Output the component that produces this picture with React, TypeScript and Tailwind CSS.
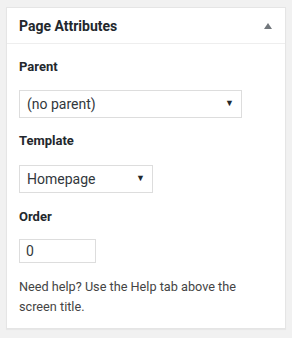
export default function App() {
  return (
    <div className="min-h-screen bg-[#f1f1f1] pl-[6px] pr-[6px] pt-[7px] pb-2 font-['Roboto',sans-serif] text-[#444]">
      <div className="w-[280px] border border-[#e5e5e5] bg-white shadow-[0_1px_1px_rgba(0,0,0,0.04)]">
        <div className="flex h-[36px] items-center justify-between border-b border-[#eee] pl-3 pr-[13px]">
          <h2 className="text-[14px] font-bold leading-none text-[#23282d]">Page Attributes</h2>
          <svg width="8" height="6" viewBox="0 0 8 6" className="mt-[1px]">
            <path d="M4 0 L8 6 L0 6 Z" fill="#72777c" />
          </svg>
        </div>
        <div className="px-3 pb-[11px] pt-[13px] text-[13px]">
          <p className="font-bold leading-[20px] text-[#23282d]">Parent</p>
          <div className="mt-[13px] flex h-[28px] w-[223px] items-center justify-between border border-[#ddd] pl-[7px] pr-[7px] text-[14px] text-[#32373c]">
            <span>(no parent)</span>
            <span className="text-[9px] text-[#23282d]">▼</span>
          </div>
          <p className="mt-[13px] font-bold leading-[20px] text-[#23282d]">Template</p>
          <div className="mt-[14px] flex h-[28px] w-[134px] items-center justify-between border border-[#ddd] pl-[7px] pr-[7px] text-[14px] text-[#32373c]">
            <span>Homepage</span>
            <span className="text-[9px] text-[#23282d]">▼</span>
          </div>
          <p className="mt-[14px] font-bold leading-[20px] text-[#23282d]">Order</p>
          <div className="mt-[12px] flex h-[24px] w-[77px] items-center border border-[#ddd] pl-[6px] text-[14px] text-[#32373c]">
            0
          </div>
          <p className="mt-[14px] text-[12.7px] leading-[20px]">Need help? Use the Help tab above the screen title.</p>
        </div>
      </div>
    </div>
  );
}
